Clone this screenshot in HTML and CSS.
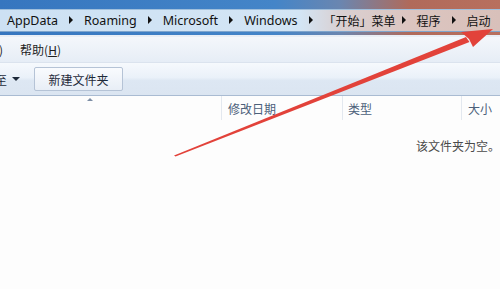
FILE: index.html
```html
<!DOCTYPE html>
<html>
<head>
<meta charset="utf-8">
<link rel="stylesheet" href="styles.css">
</head>
<body>
<div class="window">
  <div class="frame">
    <div class="address">
      <span class="crumb">AppData</span><span class="sep"></span>
      <span class="crumb">Roaming</span><span class="sep"></span>
      <span class="crumb">Microsoft</span><span class="sep"></span>
      <span class="crumb">Windows</span><span class="sep"></span>
      <span class="crumb cjk">「开始」菜单</span><span class="sep short"></span>
      <span class="crumb cjk">程序</span><span class="sep"></span>
      <span class="crumb cjk">启动</span>
    </div>
  </div>
  <div class="menubar">
    <span class="menu cut">)</span>
    <span class="menu">帮助(<u>H</u>)</span>
  </div>
  <div class="toolbar">
    <span class="tool cut">至<span class="caret"></span></span>
    <span class="button">新建文件夹</span>
  </div>
  <div class="headers">
    <div class="col name"><span class="sort"></span></div>
    <div class="col date">修改日期</div>
    <div class="col type">类型</div>
    <div class="col size">大小</div>
  </div>
  <div class="content">
    <div class="empty">该文件夹为空。</div>
  </div>
  <svg class="arrow" width="500" height="289" viewBox="0 0 500 289">
    <path d="M174 155.5 L466 37 L469.5 42 L175.5 156.5 Z" fill="#e2423a"/>
    <path d="M493 29 L461 32 L469 39 L473 47 Z" fill="#e2423a"/>
  </svg>
</div>
</body>
</html>
```
FILE: styles.css
```css
html, body {
  margin: 0;
  padding: 0;
}
body {
  width: 500px;
  height: 289px;
  overflow: hidden;
  background: #fdfdfd;
  font-family: "Noto Sans CJK SC", "Noto Sans", sans-serif;
  font-size: 12px;
  color: #1e1e1e;
}
.window {
  position: relative;
  width: 500px;
  height: 289px;
  display: flex;
  flex-direction: column;
}
.frame {
  padding-top: 9px;
  padding-bottom: 3px;
  background: linear-gradient(90deg, #3676bf 0%, #4485c8 55%, #6a86b0 68%, #b06a5a 82%, #b8705e 100%);
  border-bottom: 2px solid #e9eef5;
}
.address {
  height: 23px;
  display: flex;
  align-items: center;
  padding-left: 7px;
  padding-bottom: 1px;
  box-sizing: border-box;
  background: linear-gradient(90deg, #cde1f3 0%, #d3e5f5 60%, #d9d0d2 68%, #dcc5c0 82%, #d8c0ba 100%);
  border-top: 1px solid #9fbfdc;
  border-bottom: 1px solid #7fa5cc;
  font-family: "Noto Sans", "Noto Sans CJK SC", sans-serif;
  font-size: 12.5px;
  color: #111;
  overflow: hidden;
  white-space: nowrap;
}
.crumb {
  white-space: nowrap;
  flex: none;
}
.crumb.cjk {
  font-family: "Noto Sans CJK SC", sans-serif;
  font-size: 12px;
}
.sep {
  flex: none;
  width: 0;
  height: 0;
  border-top: 4px solid transparent;
  border-bottom: 4px solid transparent;
  border-left: 4px solid #111;
  margin: 0 11px 0 11px;
}
.sep.short {
  margin-left: 6px;
}
.menubar {
  height: 26px;
  display: flex;
  align-items: center;
  background: linear-gradient(#f4f7fb, #e6edf6);
  border-bottom: 1px solid #dbe3ee;
  font-size: 12px;
  gap: 17px;
  box-sizing: border-box;
}
.menu.cut {
  margin-left: -1px;
}
.toolbar {
  height: 33px;
  box-sizing: border-box;
  display: flex;
  align-items: center;
  background: linear-gradient(#f6f9fd 0%, #eaf1f9 45%, #dde7f3 55%, #dbe5f1 100%);
  border-bottom: 1px solid #a9bbd2;
  gap: 14px;
}
.tool.cut {
  display: flex;
  align-items: center;
  margin-left: -5px;
  color: #1e2a3a;
}
.caret {
  width: 0;
  height: 0;
  border-left: 4px solid transparent;
  border-right: 4px solid transparent;
  border-top: 4px solid #1e2a3a;
  margin-left: 5px;
}
.button {
  height: 24px;
  width: 89px;
  box-sizing: border-box;
  display: flex;
  align-items: center;
  justify-content: center;
  border: 1px solid #b5c3d6;
  border-radius: 2px;
  background: linear-gradient(#f9fbfe, #e8eef6);
  color: #1e2a3a;
  font-size: 12px;
}
.headers {
  height: 24px;
  display: flex;
  background: #fdfdfd;
  color: #4c607a;
}
.col {
  display: flex;
  align-items: center;
  padding-left: 6px;
  border-right: 1px solid #e3e8ef;
  box-sizing: border-box;
  flex: none;
}
.col.name {
  width: 222px;
  align-items: flex-start;
  padding-left: 87px;
}
.col.date {
  width: 121px;
}
.col.type {
  width: 119px;
  padding-left: 5px;
}
.col.size {
  flex: 1;
  border-right: none;
}
.sort {
  width: 0;
  height: 0;
  border-left: 3px solid transparent;
  border-right: 3px solid transparent;
  border-bottom: 3px solid #7d8ea5;
  margin-top: 2px;
}
.content {
  flex: 1;
  display: flex;
  flex-direction: column;
  align-items: flex-end;
  padding-top: 17px;
  color: #4a4a4a;
}
.empty {
  margin-right: 0;
}
.arrow {
  position: absolute;
  left: 0;
  top: 0;
}
```
